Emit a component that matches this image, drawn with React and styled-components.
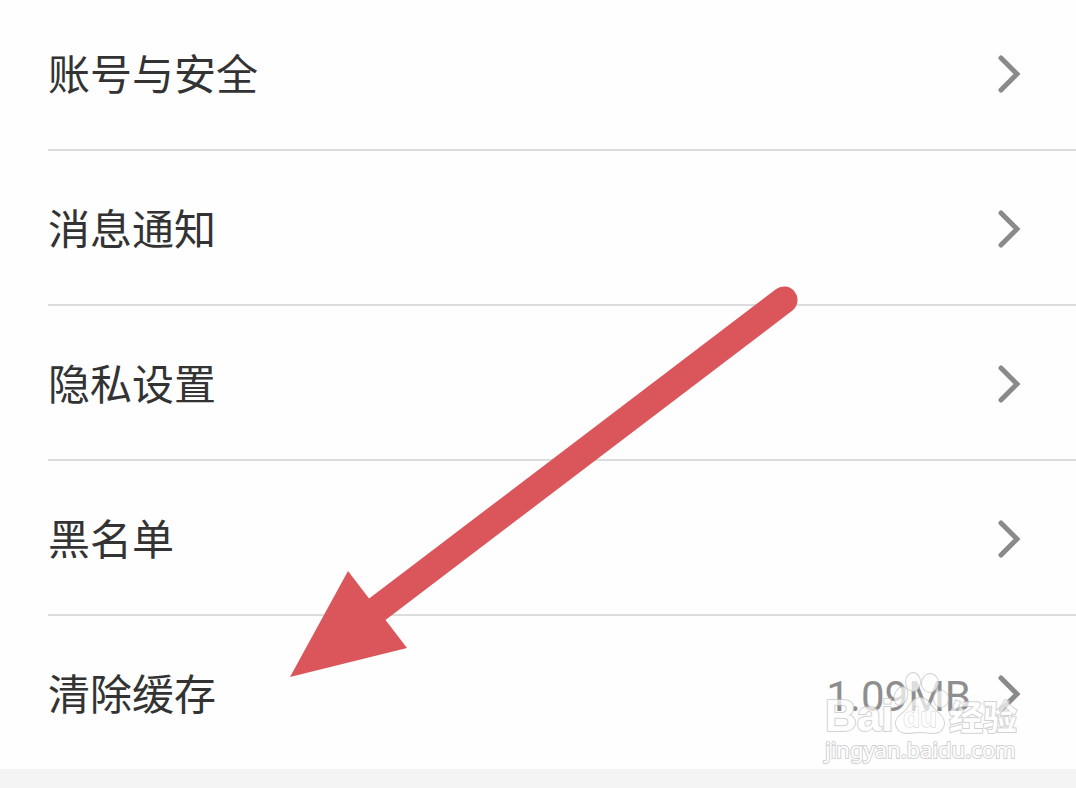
import React from 'react';
import styled, { createGlobalStyle } from 'styled-components';

const settings = [
  { id: 'account', label: '账号与安全' },
  { id: 'message', label: '消息通知' },
  { id: 'privacy', label: '隐私设置' },
  { id: 'blacklist', label: '黑名单' },
  { id: 'cache', label: '清除缓存', value: '1.09MB' },
];

const Chevron = () => (
  <ChevronIcon viewBox="0 0 24 40" aria-hidden="true">
    <path d="M4 4 L20 20 L4 36" />
  </ChevronIcon>
);

const Watermark = () => (
  <WatermarkBox>
    <WatermarkLogo>
      <LogoLatin>Bai</LogoLatin>
      <Paw viewBox="0 0 56 64">
        <ellipse cx="8" cy="25" rx="6" ry="9" transform="rotate(20 8 25)" />
        <ellipse cx="20" cy="11" rx="7" ry="9" />
        <ellipse cx="37" cy="12" rx="8" ry="9" transform="rotate(10 37 12)" />
        <ellipse cx="48" cy="28" rx="7" ry="8" />
        <path d="M27 27c-7 0-9 6-13 11S3 46 3 52s5 10 11 10c5 0 8-1 13-1s9 1 13 1c7 0 11-4 11-10 0-7-7-10-11-15S34 27 27 27z" />
        <text x="27" y="56" textAnchor="middle">du</text>
      </Paw>
      <LogoHan>经验</LogoHan>
    </WatermarkLogo>
    <WatermarkUrl>jingyan.baidu.com</WatermarkUrl>
  </WatermarkBox>
);

const App = () => {
  return (
    <>
      <GlobalStyle />
      <Panel>
        <List>
          {settings.map((item) => (
            <Item key={item.id}>
              <RowButton type="button">
                <Label>{item.label}</Label>
                {item.value && <Value>{item.value}</Value>}
                <Chevron />
              </RowButton>
            </Item>
          ))}
        </List>

        {/* 指向「清除缓存」的箭头 */}
        <Arrow viewBox="0 0 520 400" aria-hidden="true">
          <line x1="95" y1="336" x2="504" y2="25" />
          <path d="M10 402 L68 296 L127 373 Z" />
        </Arrow>

        <Watermark />
      </Panel>
    </>
  );
};

const GlobalStyle = createGlobalStyle`
  * {
    box-sizing: border-box;
  }

  body {
    margin: 0;
    background-color: #f4f4f4;
    font-family: Roboto, 'Noto Sans CJK SC', sans-serif;
  }
`;

const Panel = styled.main`
  position: relative;
  background-color: #fefefe;
  overflow: hidden;
`;

const List = styled.ul`
  list-style: none;
  margin: 0;
  padding: 0 0 0 48px;
`;

const Item = styled.li`
  padding-top: 4px;
  border-bottom: 2px solid #dcdcdc;

  &:first-child {
    padding-top: 0;
  }

  &:last-child {
    border-bottom: none;
  }
`;

const RowButton = styled.button`
  display: flex;
  align-items: center;
  width: 100%;
  height: 149px;
  padding: 0 55px 0 0;
  border: none;
  background: none;
  font-family: inherit;
  font-size: 42px;
  line-height: 60px;
  text-align: left;
  cursor: pointer;
`;

const Label = styled.span`
  flex: 1;
  padding-top: 2px;
  color: #333;
`;

const Value = styled.span`
  margin-right: 26px;
  padding-top: 4px;
  color: #8e8e8e;
`;

const ChevronIcon = styled.svg`
  width: 24px;
  height: 40px;
  margin-bottom: 2px;
  fill: none;
  stroke: #8a8a8a;
  stroke-width: 5;
  stroke-linecap: round;
  stroke-linejoin: miter;
`;

const Arrow = styled.svg`
  position: absolute;
  top: 275px;
  left: 280px;
  width: 520px;
  height: 400px;
  overflow: visible;
  pointer-events: none;
  fill: #db565b;

  line {
    stroke: #db565b;
    stroke-width: 27;
    stroke-linecap: round;
  }
`;

const WatermarkBox = styled.div`
  position: absolute;
  right: 56px;
  bottom: 0;
  width: 195px;
  pointer-events: none;
  opacity: 0.7;
  color: #fff;
  -webkit-text-stroke: 2px #c0c0c0;
  paint-order: stroke fill;
`;

const WatermarkLogo = styled.div`
  display: flex;
  align-items: flex-end;
  height: 64px;
`;

const LogoLatin = styled.span`
  width: 68px;
  font-family: 'Liberation Sans', sans-serif;
  font-size: 44px;
  font-weight: bold;
  line-height: 38px;
`;

const Paw = styled.svg`
  flex: none;
  width: 56px;
  height: 64px;
  fill: #fff;
  stroke: #c0c0c0;
  stroke-width: 2;

  text {
    font-family: 'Liberation Sans', sans-serif;
    font-size: 28px;
    font-weight: bold;
    stroke-width: 1;
  }
`;

const LogoHan = styled.span`
  font-family: 'Noto Sans CJK SC', sans-serif;
  font-size: 34px;
  font-weight: bold;
  line-height: 38px;
`;

const WatermarkUrl = styled.div`
  padding-bottom: 6px;
  font-family: 'Noto Sans', sans-serif;
  font-size: 22px;
  line-height: 28px;
  white-space: nowrap;
`;

export default App;
